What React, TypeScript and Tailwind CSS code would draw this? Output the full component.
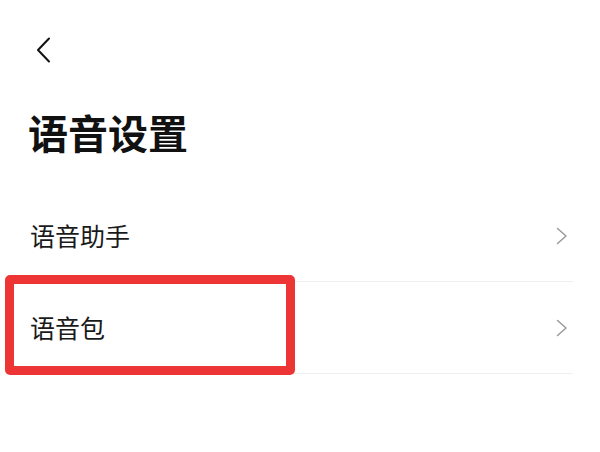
const items = ["语音助手", "语音包"];

function BackIcon() {
  return (
    <svg width="15" height="26" viewBox="0 0 15 26" fill="none" className="block">
      <path d="M13 1.5 L2 13 L13 24.5" stroke="#111" strokeWidth="2" strokeLinecap="round" strokeLinejoin="round" />
    </svg>
  );
}

function ArrowIcon() {
  return (
    <svg width="12" height="18" viewBox="0 0 12 18" fill="none" className="block mr-[5px]">
      <path d="M1.5 1.5 L10 9 L1.5 16.5" stroke="#9a9a9a" strokeWidth="1.5" strokeLinecap="round" strokeLinejoin="round" />
    </svg>
  );
}

export default function App() {
  return (
    <div
      className="relative w-[600px] h-[452px] bg-white overflow-hidden"
      style={{ fontFamily: '"Noto Sans CJK SC", "Noto Sans", sans-serif' }}
    >
      {/* 顶部返回 */}
      <div className="pt-[37px] pl-[36px]">
        <BackIcon />
      </div>

      <h1 className="mt-[49px] pl-[28px] text-[40px] leading-[40px] font-bold text-[#111]">语音设置</h1>

      {/* 列表 */}
      <div className="mt-[38px] pl-[30px] pr-[27px]">
        {items.map((label) => (
          <div
            key={label}
            className="flex items-center justify-between h-[92px] border-b border-[#f0f0f0]"
          >
            <span className="text-[25px] leading-none text-[#1a1a1a]">{label}</span>
            <ArrowIcon />
          </div>
        ))}
      </div>

      {/* 红色标注框 */}
      <div className="absolute left-[5px] top-[275px] w-[290px] h-[100px] border-[9px] border-[#ee3535] rounded-[5px]" />
    </div>
  );
}
